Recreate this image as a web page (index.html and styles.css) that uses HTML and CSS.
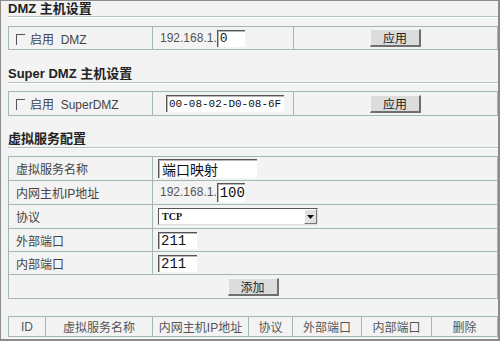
FILE: index.html
```html
<!DOCTYPE html>
<html>
<head>
<meta charset="utf-8">
<link rel="stylesheet" href="styles.css">
</head>
<body>
<div class="frame">
  <div class="title t1">DMZ 主机设置</div>
  <table class="grid g1">
    <colgroup><col class="k1"><col class="k2"><col></colgroup>
    <tr>
      <td class="lbl"><span class="chk"></span>启用&nbsp; DMZ</td>
      <td class="val">192.168.1.<span class="inp i-dmz">0</span></td>
      <td class="ctr"><span class="btn">应用</span></td>
    </tr>
  </table>

  <div class="title t2">Super DMZ 主机设置</div>
  <table class="grid g2">
    <colgroup><col class="k1"><col class="k2"><col></colgroup>
    <tr>
      <td class="lbl"><span class="chk"></span>启用&nbsp; SuperDMZ</td>
      <td class="val"><span class="inp i-mac">00-08-02-D0-08-6F</span></td>
      <td class="ctr"><span class="btn">应用</span></td>
    </tr>
  </table>

  <div class="title t3">虚拟服务配置</div>
  <table class="grid g3">
    <colgroup><col class="k1"><col></colgroup>
    <tr class="r24"><td class="lbl">虚拟服务名称</td><td class="val"><span class="inp i-name">端口映射</span></td></tr>
    <tr class="r24"><td class="lbl">内网主机IP地址</td><td class="val">192.168.1.<span class="inp i-num">100</span></td></tr>
    <tr class="r24"><td class="lbl">协议</td><td class="val"><span class="sel"><span class="seltxt">TCP</span><span class="arrow"><svg width="7" height="4" viewBox="0 0 7 4"><path d="M0 0H7L3.5 4Z" fill="#111"/></svg></span></span></td></tr>
    <tr class="r23"><td class="lbl">外部端口</td><td class="val"><span class="inp i-port">211</span></td></tr>
    <tr class="r23"><td class="lbl">内部端口</td><td class="val"><span class="inp i-port">211</span></td></tr>
    <tr class="r24"><td colspan="2" class="ctr"><span class="btn">添加</span></td></tr>
  </table>

  <table class="grid g4">
    <colgroup><col class="c1"><col class="c2"><col class="c3"><col class="c4"><col class="c5"><col class="c6"><col></colgroup>
    <tr>
      <td class="h">ID</td>
      <td class="h">虚拟服务名称</td>
      <td class="h">内网主机IP地址</td>
      <td class="h">协议</td>
      <td class="h">外部端口</td>
      <td class="h">内部端口</td>
      <td class="h">删除</td>
    </tr>
  </table>
</div>
</body>
</html>
```

FILE: styles.css
```css
html, body {
  margin: 0;
  padding: 0;
  background: #f3f3f3;
}
body {
  font-family: "Liberation Sans", "Noto Sans CJK SC", sans-serif;
  font-size: 12px;
  color: #444;
}
.frame {
  width: 500px;
  height: 341px;
  box-sizing: border-box;
  border: 1px solid #8c8c8c;
  border-right-width: 2px;
  border-bottom-width: 2px;
  background: #f3f3f3;
  padding-left: 7px;
  overflow: hidden;
}
.title {
  font-family: "Liberation Sans", "Noto Sans CJK SC", sans-serif;
  font-weight: bold;
  font-size: 13px;
  color: #222;
  line-height: 15px;
  border-bottom: 1px solid #b3c3bd;
  box-shadow: 0 1px 0 #ffffff;
}
.t1 { padding-top: 0; }
.t2 { padding-top: 16px; line-height: 16px; }
.t3 { padding-top: 15px; line-height: 16px; }

.grid {
  width: 490px;
  border-spacing: 0;
  border-top: 1px solid #a2b8b0;
  border-left: 1px solid #a2b8b0;
  table-layout: fixed;
}
.grid td {
  border-right: 1px solid #a2b8b0;
  border-bottom: 1px solid #a2b8b0;
  padding: 0;
  white-space: nowrap;
  overflow: hidden;
}
.k1 { width: 144px; }
.k2 { width: 141px; }

.g1 { margin-top: 9px; }
.g1 td { height: 22px; }
.g2 { margin-top: 8px; }
.g2 td { height: 23px; }
.g3 { margin-top: 8px; }
.g3 .r24 td { height: 23px; }
.g3 .r23 td { height: 22px; }
.g4 { margin-top: 17px; }
.g4 td { height: 19px; }

.lbl {
  padding-left: 7px !important;
  color: #444;
}
.val {
  padding-left: 7px !important;
  color: #555;
}
.ctr { text-align: center; }

.chk {
  display: inline-block;
  width: 8px;
  height: 10px;
  border-top: 1px solid #555;
  border-left: 1px solid #555;
  margin-right: 5px;
  vertical-align: -1px;
}

.inp {
  display: inline-block;
  vertical-align: middle;
  background: #fff;
  border-top: 1px solid #555;
  border-left: 1px solid #555;
  box-shadow: inset 1px 1px 0 #b8b8b8;
  color: #111;
  box-sizing: border-box;
  padding-left: 2px;
  font-family: "Liberation Mono", "Noto Sans CJK SC", monospace;
  white-space: nowrap;
  overflow: hidden;
}
.i-dmz { width: 28px; height: 17px; line-height: 16px; font-size: 13px; }
.i-mac { width: 118px; height: 17px; line-height: 16px; font-size: 11px; margin-left: 6px; }
.i-name { width: 99px; height: 19px; line-height: 18px; font-size: 14px; margin-left: -2px; font-family: "Noto Sans CJK SC", sans-serif; padding-left: 3px; }
.i-num { width: 28px; height: 19px; line-height: 18px; font-size: 14px; }
.i-port { width: 39px; height: 17px; line-height: 16px; font-size: 14px; margin-left: -2px; }

.sel {
  display: inline-flex;
  vertical-align: middle;
  width: 160px;
  height: 17px;
  margin-left: -2px;
  box-sizing: border-box;
  background: #fff;
  border-top: 1px solid #555;
  border-left: 1px solid #555;
  border-right: 1px solid #ddd;
  border-bottom: 1px solid #ddd;
}
.seltxt {
  flex: 1;
  font-family: "Liberation Serif", serif;
  font-weight: bold;
  font-size: 10px;
  line-height: 15px;
  color: #111;
  padding-left: 3px;
}
.arrow {
  width: 13px;
  height: 15px;
  box-sizing: border-box;
  background: #e2e2e2;
  border-right: 1px solid #777;
  border-bottom: 1px solid #777;
  border-top: 1px solid #fff;
  border-left: 1px solid #fff;
  display: flex;
  align-items: center;
  justify-content: center;
}

.btn {
  display: inline-block;
  vertical-align: middle;
  width: 51px;
  height: 18px;
  box-sizing: border-box;
  background: #dcdcdc;
  border-top: 1px solid #f6f6f6;
  border-left: 1px solid #f6f6f6;
  border-right: 2px solid #6f6f6f;
  border-bottom: 2px solid #6f6f6f;
  font-family: "Noto Sans CJK SC", sans-serif;
  font-size: 12px;
  line-height: 15px;
  color: #222;
  text-align: center;
}

.h {
  text-align: center;
  color: #555;
}
.c1 { width: 37px; }
.c2 { width: 107px; }
.c3 { width: 96px; }
.c4 { width: 44px; }
.c5 { width: 69px; }
.c6 { width: 70px; }
```
